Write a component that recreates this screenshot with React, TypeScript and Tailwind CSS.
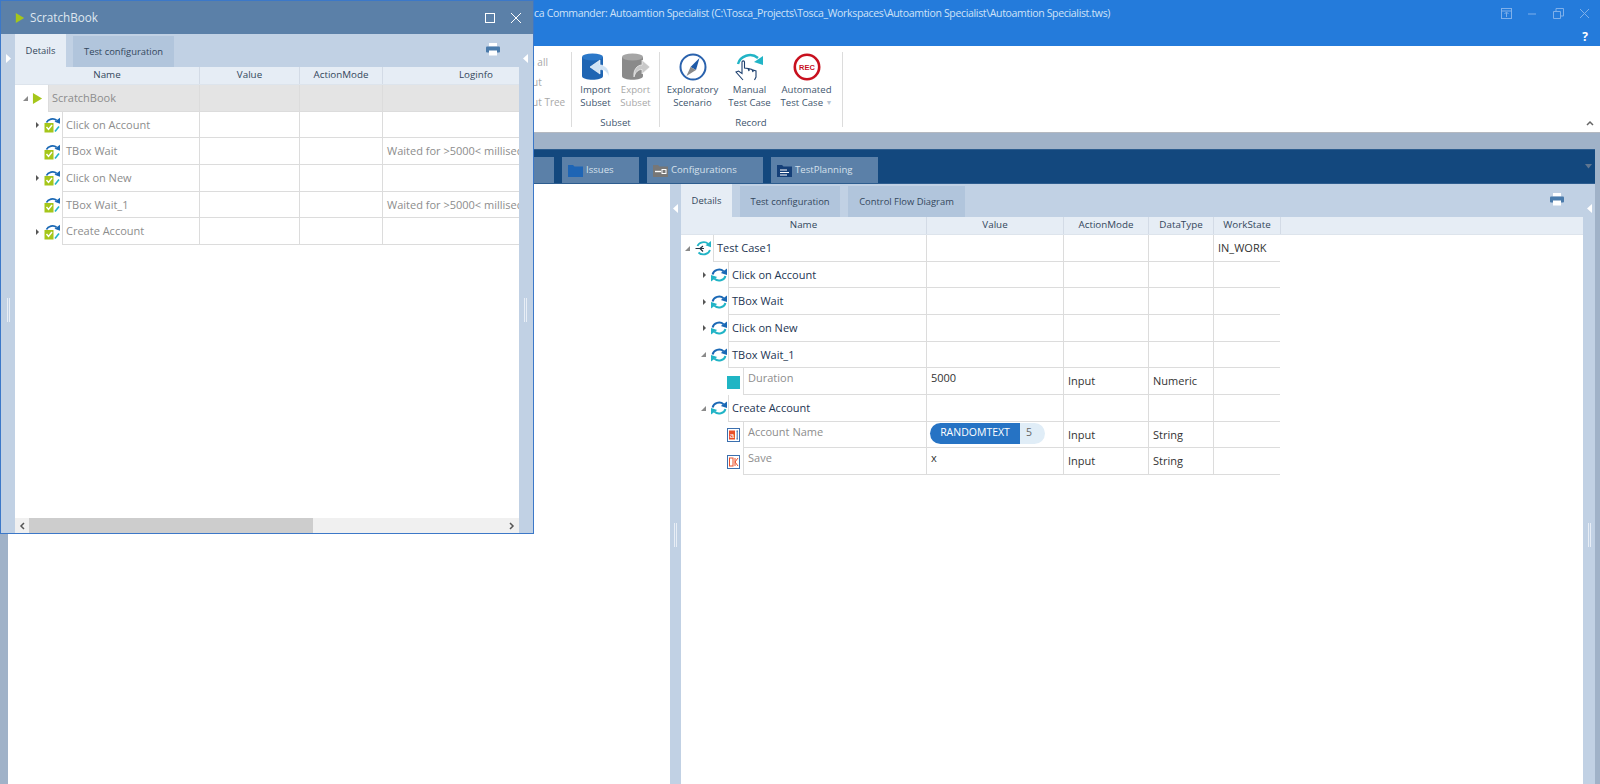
import type { ReactNode } from 'react'

const font = { fontFamily: '"Open Sans", "Noto Sans", sans-serif' }

// ---- small icons ----

function Play({ size = 12 }: { size?: number }) {
  return (
    <svg width={size} height={size} viewBox="0 0 12 12">
      <polygon points="1,0 11,6 1,12" fill="#a5c61a" />
    </svg>
  )
}

function ChevRight() {
  return (
    <svg width="5" height="8" viewBox="0 0 5 8" className="shrink-0">
      <polygon points="1,1 4,4 1,7" fill="#555" />
    </svg>
  )
}

function ChevOpen() {
  return (
    <svg width="7" height="7" viewBox="0 0 7 7" className="shrink-0">
      <polygon points="6,1 6,6 1,6" fill="#8a8a8a" />
    </svg>
  )
}

function Loop() {
  return (
    <svg width="16" height="16" viewBox="0 0 16 16" className="shrink-0">
      <path d="M1.6 7.5 C2.5 2.8 9 1 12.5 4.2" fill="none" stroke="#1a68b5" strokeWidth="2" />
      <polygon points="16,1.5 16,8 9.8,6" fill="#1a68b5" />
      <path d="M14.4 9 C13.5 13.5 7 15 3.5 11.8" fill="none" stroke="#21b4c6" strokeWidth="2" />
      <polygon points="0,8 0,14.5 6.2,10" fill="#21b4c6" />
    </svg>
  )
}

function CaseLoop() {
  return (
    <svg width="17" height="17" viewBox="0 0 17 17" className="shrink-0">
      <path d="M2.5 6 C4 2 10 0.8 13.2 3.8" fill="none" stroke="#21b4c6" strokeWidth="1.8" />
      <polygon points="16,1 16,7.2 10.5,5.2" fill="#21b4c6" />
      <path d="M15 10 C13.5 14.5 7 16 3.5 12.5" fill="none" stroke="#21b4c6" strokeWidth="1.8" />
      <path d="M0.5 8.5 H9 M5 8.5 L8 6 M5 8.5 L8 11.5" fill="none" stroke="#234" strokeWidth="1.1" />
    </svg>
  )
}

function ScratchStep() {
  return (
    <svg width="17" height="16" viewBox="0 0 17 16" className="shrink-0">
      <path d="M2.5 5.5 C4 2 9.5 0.6 12.5 3.2" fill="none" stroke="#1a68b5" strokeWidth="1.8" />
      <polygon points="16,0.8 16,6.8 10.5,4.8" fill="#1a68b5" />
      <rect x="0.5" y="6" width="9" height="9.5" fill="#a5c61a" />
      <path d="M2.5 10 L4.5 12.4 L8 8" fill="none" stroke="#fff" strokeWidth="1.5" />
      <path d="M11 14.5 L15 9.5" stroke="#21b4c6" strokeWidth="1.6" />
    </svg>
  )
}

function AttrSquare() {
  return <div className="w-[13px] h-[13px] bg-[#20b5c4] shrink-0 mr-[2px] mt-[1px]" />
}

function AttrText() {
  return (
    <svg width="13" height="14" viewBox="0 0 13 14" className="shrink-0 mr-[2px] mt-[1px]">
      <rect x="0.5" y="0.5" width="12" height="13" fill="#fff" stroke="#3b6fae" />
      <rect x="2" y="2.5" width="6" height="9" fill="#e8502a" />
      <text x="5" y="10" fontSize="8" fill="#fff" textAnchor="middle" fontFamily="Liberation Sans">a</text>
      <path d="M9.5 3 H11 M10.2 3 V11 M9.5 11 H11" stroke="#3b6fae" fill="none" />
    </svg>
  )
}

function AttrOk() {
  return (
    <svg width="13" height="14" viewBox="0 0 13 14" className="shrink-0 mr-[2px] mt-[1px]">
      <rect x="0.5" y="0.5" width="12" height="13" fill="#fff" stroke="#3b6fae" />
      <rect x="2.5" y="3" width="3.5" height="8" fill="none" stroke="#e8502a" />
      <path d="M8 3 V11 M11 3 L8 7 L11 11" fill="none" stroke="#e8502a" />
    </svg>
  )
}

function Printer({ color = '#4a7bab' }: { color?: string }) {
  return (
    <svg width="14" height="13" viewBox="0 0 14 13">
      <rect x="3" y="0" width="8" height="3.5" fill="#fff" />
      <rect x="0" y="3.5" width="14" height="6" rx="1" fill={color} />
      <rect x="3" y="7.5" width="8" height="5" fill="#fff" />
    </svg>
  )
}

function Folder({ color }: { color: string }) {
  return (
    <svg width="15" height="13" viewBox="0 0 15 13">
      <path d="M0 1 H5 L6.5 2.5 H15 V13 H0 Z" fill={color} />
    </svg>
  )
}

function Splitter() {
  return <div className="w-[3px] h-[24px] border-x border-[#e8eef6]" />
}

function Arrow({ dir }: { dir: 'left' | 'right' }) {
  return (
    <svg width="5" height="9" viewBox="0 0 5 9">
      <polygon points={dir === 'left' ? '5,0 5,9 0,4.5' : '0,0 0,9 5,4.5'} fill="#fff" />
    </svg>
  )
}

// ribbon icons

function Cylinder({ body, side, arrow, flip }: { body: string; side: string; arrow: string; flip?: boolean }) {
  return (
    <svg width="30" height="28" viewBox="0 0 30 28">
      <path d="M1 4 V23 C1 28 22 28 22 23 V4 Z" fill={body} />
      <ellipse cx="11.5" cy="4" rx="10.5" ry="3.4" fill={side} />
      {flip ? (
        <path d="M13 24 C12 17 16 12 21 12 V7 L29 14 L21 21 V16.5 C17 16.5 14.5 19 13 24 Z" fill={arrow} stroke="#fff" strokeWidth="0.6" />
      ) : (
        <path d="M28 24 C29 17 25 12 19 12 V7 L9 14 L19 21 V16.5 C23 16.5 26 19 28 24 Z" fill={arrow} stroke="#fff" strokeWidth="0.6" />
      )}
    </svg>
  )
}

function Compass() {
  return (
    <svg width="28" height="28" viewBox="0 0 28 28">
      <circle cx="14" cy="14" r="12.5" fill="#fff" stroke="#2a62ad" strokeWidth="2" />
      <polygon points="20.5,5 17,17 11.5,14" fill="#1e5aa8" />
      <polygon points="7.5,23 11.5,14 17,17" fill="#8a8a8a" />
    </svg>
  )
}

function HandIcon() {
  return (
    <svg width="30" height="28" viewBox="0 0 30 28">
      <path d="M3 11 C5 3 16 -1 23 5" fill="none" stroke="#21b4c6" strokeWidth="2.4" />
      <polygon points="28,3 28,12 19,9" fill="#21b4c6" />
      <path
        d="M8 27 L1 19 L3.5 18 L7 20.5 V9 C7 7.5 9.5 7.5 9.5 9 V15 L13 15.5 L14 18 V15.8 L17 16.5 L18 19 V17 L21 18 V24 L19.5 27"
        fill="#fff"
        stroke="#1c3f6e"
        strokeWidth="1.1"
      />
    </svg>
  )
}

function RecIcon() {
  return (
    <svg width="28" height="28" viewBox="0 0 28 28">
      <circle cx="14" cy="14" r="12.2" fill="#fff" stroke="#c8101e" strokeWidth="2.6" />
      <text x="14" y="16.5" textAnchor="middle" fontSize="7.5" fontWeight="700" fill="#c8101e" fontFamily="Liberation Sans">REC</text>
    </svg>
  )
}

// ---- table bits ----

type RowData = {
  indent: number
  icon: ReactNode
  chev?: 'open' | 'closed'
  name: string
  nameTone: string
  bg?: string
  top?: boolean
  cells: { text?: string; node?: ReactNode; top?: boolean }[]
}

function Row({ row, widths, nameWidth, tone }: { row: RowData; widths: number[]; nameWidth: number; tone: string }) {
  return (
    <div className="flex h-[26.67px]">
      <div className="flex items-center justify-end shrink-0" style={{ width: row.indent }}>
        {row.chev === 'open' && <ChevOpen />}
        {row.chev === 'closed' && <ChevRight />}
        <div className="ml-[4px] mr-[1px] flex items-center">{row.icon}</div>
      </div>
      <div
        className={`flex border-l border-b border-[#dcdcdc] overflow-hidden shrink-0 ${row.top ? 'pl-[4px] pt-[2px] items-start' : 'pl-[3px] pt-[1px] items-center'} ${row.nameTone}`}
        style={{ width: nameWidth - row.indent, backgroundColor: row.bg }}
      >
        {row.name}
      </div>
      {widths.map((w, i) => {
        const c = row.cells[i] || {}
        return (
          <div
            key={i}
            className={`flex pl-[4px] border-l border-b border-[#dcdcdc] overflow-hidden whitespace-nowrap shrink-0 ${c.top ? 'pt-[2px] items-start' : 'pt-[1px] items-center'} ${tone}`}
            style={{ width: w, backgroundColor: row.bg }}
          >
            {c.node || c.text}
          </div>
        )
      })}
    </div>
  )
}

function Header({ cols }: { cols: { label: string; w: number }[] }) {
  return (
    <div className="flex h-[18px] bg-[#e6edf5] border-b border-[#dde4ec] text-[#33475c] text-[9.8px] overflow-hidden">
      {cols.map((c, i) => (
        <div key={c.label} className={`flex items-center justify-center shrink-0 ${i > 0 ? 'border-l border-[#d3dbe6]' : ''}`} style={{ width: c.w }}>
          {c.label}
        </div>
      ))}
      <div className="flex-1 border-l border-[#d3dbe6]" />
    </div>
  )
}

const pill = (
  <div className="flex h-[21px] mt-[-1px] -ml-[1px] text-[10.5px]">
    <div className="w-[90px] bg-[#2673c4] text-white rounded-l-full flex items-center justify-center">RANDOMTEXT</div>
    <div className="w-[25px] bg-[#e0edf7] text-[#666] rounded-r-full flex items-center pl-[6px]">5</div>
  </div>
)

const dark = 'text-[#1d3552]'
const grey = 'text-[#8d8d8d]'

const mainRows: RowData[] = [
  { indent: 32, icon: <CaseLoop />, chev: 'open', name: 'Test Case1', nameTone: dark, cells: [{}, {}, {}, { text: 'IN_WORK' }] },
  { indent: 47, icon: <Loop />, chev: 'closed', name: 'Click on Account', nameTone: dark, cells: [] },
  { indent: 47, icon: <Loop />, chev: 'closed', name: 'TBox Wait', nameTone: dark, cells: [] },
  { indent: 47, icon: <Loop />, chev: 'closed', name: 'Click on New', nameTone: dark, cells: [] },
  { indent: 47, icon: <Loop />, chev: 'open', name: 'TBox Wait_1', nameTone: dark, cells: [] },
  { indent: 62, icon: <AttrSquare />, name: 'Duration', nameTone: grey, top: true, cells: [{ text: '5000', top: true }, { text: 'Input' }, { text: 'Numeric' }] },
  { indent: 47, icon: <Loop />, chev: 'open', name: 'Create Account', nameTone: dark, cells: [] },
  { indent: 62, icon: <AttrText />, name: 'Account Name', nameTone: grey, top: true, cells: [{ node: pill, top: true }, { text: 'Input' }, { text: 'String' }] },
  { indent: 62, icon: <AttrOk />, name: 'Save', nameTone: grey, top: true, cells: [{ text: 'x', top: true }, { text: 'Input' }, { text: 'String' }] },
]

const waited = 'Waited for >5000< milliseconds'

const scratchRows: RowData[] = [
  { indent: 33, icon: <div className="-ml-[1px] mr-[4px]"><Play size={11} /></div>, chev: 'open', name: 'ScratchBook', nameTone: grey, bg: '#e4e4e4', cells: [] },
  { indent: 47, icon: <ScratchStep />, chev: 'closed', name: 'Click on Account', nameTone: grey, cells: [] },
  { indent: 47, icon: <ScratchStep />, name: 'TBox Wait', nameTone: grey, cells: [{}, {}, { text: waited }] },
  { indent: 47, icon: <ScratchStep />, chev: 'closed', name: 'Click on New', nameTone: grey, cells: [] },
  { indent: 47, icon: <ScratchStep />, name: 'TBox Wait_1', nameTone: grey, cells: [{}, {}, { text: waited }] },
  { indent: 47, icon: <ScratchStep />, chev: 'closed', name: 'Create Account', nameTone: grey, cells: [] },
]

function RibbonBtn({ icon, lines, disabled, w }: { icon: ReactNode; lines: ReactNode[]; disabled?: boolean; w: number }) {
  return (
    <div className="flex flex-col items-center shrink-0" style={{ width: w }}>
      <div className="h-[30px] flex items-center justify-center">{icon}</div>
      <div className={`mt-[2px] text-center leading-[12.5px] ${disabled ? 'text-[#a8a8a8]' : 'text-[#41566e]'}`}>
        {lines.map((l, i) => (
          <div key={i} className="whitespace-nowrap">{l}</div>
        ))}
      </div>
    </div>
  )
}

function ScratchWindow() {
  return (
    <div className="absolute left-0 top-0 w-[534px] h-[534px] border border-[#3c78c8] bg-[#c1d1e4] flex flex-col z-10 overflow-hidden">
      <div className="h-[33px] bg-[#5b80a8] flex items-center pl-[14px] pr-[11px] shrink-0">
        <Play size={10} />
        <span className="ml-[5px] text-[11.7px] text-[#dfe7f0]">ScratchBook</span>
        <div className="ml-auto flex items-center gap-[15px]">
          <div className="w-[10px] h-[10px] border border-white" />
          <svg width="12" height="12" viewBox="0 0 12 12">
            <path d="M1 1 L11 11 M11 1 L1 11" stroke="#fff" strokeWidth="1" />
          </svg>
        </div>
      </div>
      <div className="flex flex-1 min-h-0">
        <div className="w-[14px] flex flex-col items-center shrink-0 relative">
          <div className="mt-[20px]"><Arrow dir="right" /></div>
          <div className="mt-[235px]"><Splitter /></div>
        </div>
        <div className="w-[504px] flex flex-col shrink-0 bg-white">
          <div className="h-[33px] bg-[#c1d1e4] flex items-end shrink-0 relative text-[9.4px] text-[#33475c]">
            <div className="w-[51px] h-[33px] bg-[#e6edf5] flex items-center justify-center pt-[1px]">Details</div>
            <div className="ml-[7px] w-[101px] h-[31px] bg-[#b1c5dc] flex items-center justify-center pt-[2px]">Test configuration</div>
            <div className="absolute right-[19px] top-[9px]"><Printer /></div>
          </div>
          <Header cols={[{ label: 'Name', w: 184 }, { label: 'Value', w: 100 }, { label: 'ActionMode', w: 83 }, { label: 'Loginfo', w: 187 }]} />
          {scratchRows.map(r => (
            <Row key={r.name} row={r} widths={[100, 83, 137]} nameWidth={184} tone={grey} />
          ))}
          <div className="mt-auto h-[15px] bg-[#f0f0f0] flex items-center shrink-0">
            <div className="w-[14px] flex justify-center shrink-0">
              <svg width="6" height="8" viewBox="0 0 6 8"><path d="M5 1 L2 4 L5 7" fill="none" stroke="#555" strokeWidth="1.5" /></svg>
            </div>
            <div className="w-[284px] h-[15px] bg-[#cdcdcd]" />
            <div className="ml-auto w-[14px] flex justify-center shrink-0">
              <svg width="6" height="8" viewBox="0 0 6 8"><path d="M1 1 L4 4 L1 7" fill="none" stroke="#555" strokeWidth="1.5" /></svg>
            </div>
          </div>
        </div>
        <div className="flex-1 flex flex-col items-center pr-[2px]">
          <div className="mt-[20px]"><Arrow dir="left" /></div>
          <div className="mt-[235px]"><Splitter /></div>
        </div>
      </div>
    </div>
  )
}

export default function App() {
  return (
    <div className="relative w-[1600px] h-[784px] overflow-hidden bg-white flex flex-col text-[11px]" style={font}>
      <ScratchWindow />

      {/* title bar */}
      <div className="h-[46px] bg-[#247bdb] shrink-0 relative">
        <div className="flex items-center h-[27px]">
          <span className="ml-[477px] text-[#cfe2f8] whitespace-nowrap text-[10.5px] tracking-[-0.33px]">
            Tricentis Tosca Commander: Autoamtion Specialist (C:\Tosca_Projects\Tosca_Workspaces\Autoamtion Specialist\Autoamtion Specialist.tws)
          </span>
          <div className="ml-auto flex items-center gap-[15px] pr-[10px]">
            <svg width="11" height="11" viewBox="0 0 11 11"><rect x="0.5" y="0.5" width="10" height="10" fill="none" stroke="#7fb0ea" /><path d="M0.5 3 H10.5 M5.5 9 V4.5 M3.5 6 L5.5 4 L7.5 6" fill="none" stroke="#7fb0ea" /></svg>
            <svg width="11" height="11" viewBox="0 0 11 11"><path d="M1 6 H9" stroke="#7fb0ea" /></svg>
            <svg width="11" height="11" viewBox="0 0 11 11"><path d="M0.5 3.5 H7.5 V10.5 H0.5 Z M3 3 V0.5 H10.5 V8 H8" fill="none" stroke="#7fb0ea" /></svg>
            <svg width="11" height="11" viewBox="0 0 11 11"><path d="M1 1 L10 10 M10 1 L1 10" stroke="#7fb0ea" /></svg>
          </div>
        </div>
        <div className="flex justify-end pr-[12px]">
          <span className="text-white font-bold text-[12px] leading-[19px]">?</span>
        </div>
      </div>

      {/* ribbon */}
      <div className="h-[86px] bg-white shrink-0 flex pt-[6px] relative text-[9.6px]">
        <div className="w-[572px] h-[75px] border-r border-[#dcdcdc] shrink-0 pl-[498px] text-[#a8a8a8] leading-[20px] text-[10px]">
          <div>Checkin all</div>
          <div>Checkout</div>
          <div>Checkout Tree</div>
        </div>
        <div className="w-[88px] h-[75px] border-r border-[#dcdcdc] shrink-0 flex flex-col">
          <div className="flex justify-center">
            <RibbonBtn w={40} icon={<Cylinder body="#1f65b3" side="#2b78c9" arrow="#cfe2f4" />} lines={['Import', 'Subset']} />
            <RibbonBtn w={40} disabled icon={<Cylinder body="#8a8a8a" side="#a5a5a5" arrow="#c9c9c9" flip />} lines={['Export', 'Subset']} />
          </div>
          <div className="mt-auto -mb-[3px] text-center text-[#41566e] leading-[14px]">Subset</div>
        </div>
        <div className="w-[183px] h-[75px] border-r border-[#dcdcdc] shrink-0 flex flex-col">
          <div className="flex justify-center pr-[3px]">
            <RibbonBtn w={57} icon={<Compass />} lines={['Exploratory', 'Scenario']} />
            <RibbonBtn w={57} icon={<HandIcon />} lines={['Manual', 'Test Case']} />
            <RibbonBtn
              w={57}
              icon={<RecIcon />}
              lines={['Automated', <span key="t">Test Case <span className="text-[#b9c4d2] text-[7px] align-middle">▼</span></span>]}
            />
          </div>
          <div className="mt-auto -mb-[3px] text-center text-[#41566e] leading-[14px]">Record</div>
        </div>
        <div className="absolute right-[6px] bottom-[6px]">
          <svg width="8" height="6" viewBox="0 0 8 6"><path d="M1 5 L4 2 L7 5" fill="none" stroke="#666" strokeWidth="1.5" /></svg>
        </div>
      </div>

      <div className="flex-1 min-h-0 bg-[#a0b2c8] border-t border-[#b4b9c1] flex flex-col">
        <div className="h-[16px] shrink-0" />

        {/* dark module tabs */}
        <div className="h-[35px] mr-[5px] bg-[#13487e] border-y border-[#2d5d8f] shrink-0 flex items-end pl-[461px] gap-[8px] text-[#d6e0ec] text-[9.6px] relative">
          <div className="w-[93px] h-[26px] bg-[#5b80a8]" />
          <div className="w-[77px] h-[26px] bg-[#5b80a8] flex items-center pl-[6px] gap-[3px] pt-[1px]"><Folder color="#1e65b5" />Issues</div>
          <div className="w-[116px] h-[26px] bg-[#5b80a8] flex items-center pl-[6px] gap-[3px] pt-[1px]">
            <svg width="15" height="13" viewBox="0 0 15 13">
              <path d="M0 1 H5 L6.5 2.5 H15 V13 H0 Z" fill="#777" />
              <path d="M2 7.5 H8" stroke="#fff" strokeWidth="1.4" />
              <rect x="9" y="5.5" width="4" height="4" fill="none" stroke="#fff" />
            </svg>
            Configurations
          </div>
          <div className="w-[107px] h-[26px] bg-[#5b80a8] flex items-center pl-[6px] gap-[3px] pt-[1px]">
            <svg width="15" height="13" viewBox="0 0 15 13">
              <path d="M0 1 H5 L6.5 2.5 H15 V13 H0 Z" fill="#143f78" />
              <path d="M3 6 H10 M3 8.5 H12 M3 11 H10" stroke="#fff" />
            </svg>
            TestPlanning
          </div>
          <div className="absolute right-[3px] top-[14px]">
            <svg width="7" height="5" viewBox="0 0 7 5"><polygon points="0,0 7,0 3.5,4.5" fill="#5f7690" /></svg>
          </div>
        </div>

        {/* panes */}
        <div className="flex-1 min-h-0 flex">
          <div className="w-[8px] shrink-0" />
          <div className="w-[662px] bg-white shrink-0" />
          <div className="w-[11px] bg-[#c1d1e4] shrink-0 flex flex-col items-center">
            <div className="mt-[20px]"><Arrow dir="left" /></div>
            <div className="mt-[310px]"><Splitter /></div>
          </div>
          <div className="w-[902px] bg-white shrink-0 flex flex-col">
            <div className="h-[33px] bg-[#c1d1e4] flex items-end shrink-0 relative text-[#33475c] text-[9.4px]">
              <div className="w-[51px] h-[33px] bg-[#e6edf5] flex items-center justify-center pt-[1px]">Details</div>
              <div className="ml-[8px] w-[100px] h-[31px] bg-[#b1c5dc] flex items-center justify-center pt-[2px]">Test configuration</div>
              <div className="ml-[8px] w-[117px] h-[31px] bg-[#b1c5dc] flex items-center justify-center pt-[2px]">Control Flow Diagram</div>
              <div className="absolute right-[19px] top-[9px]"><Printer /></div>
            </div>
            <Header cols={[{ label: 'Name', w: 245 }, { label: 'Value', w: 137 }, { label: 'ActionMode', w: 85 }, { label: 'DataType', w: 65 }, { label: 'WorkState', w: 67 }]} />
            {mainRows.map(r => (
              <Row key={r.name} row={r} widths={[137, 85, 65, 67]} nameWidth={245} tone="text-[#333]" />
            ))}
          </div>
          <div className="w-[12px] bg-[#c1d1e4] shrink-0 flex flex-col items-center">
            <div className="mt-[20px]"><Arrow dir="left" /></div>
            <div className="mt-[310px]"><Splitter /></div>
          </div>
        </div>
      </div>
    </div>
  )
}
